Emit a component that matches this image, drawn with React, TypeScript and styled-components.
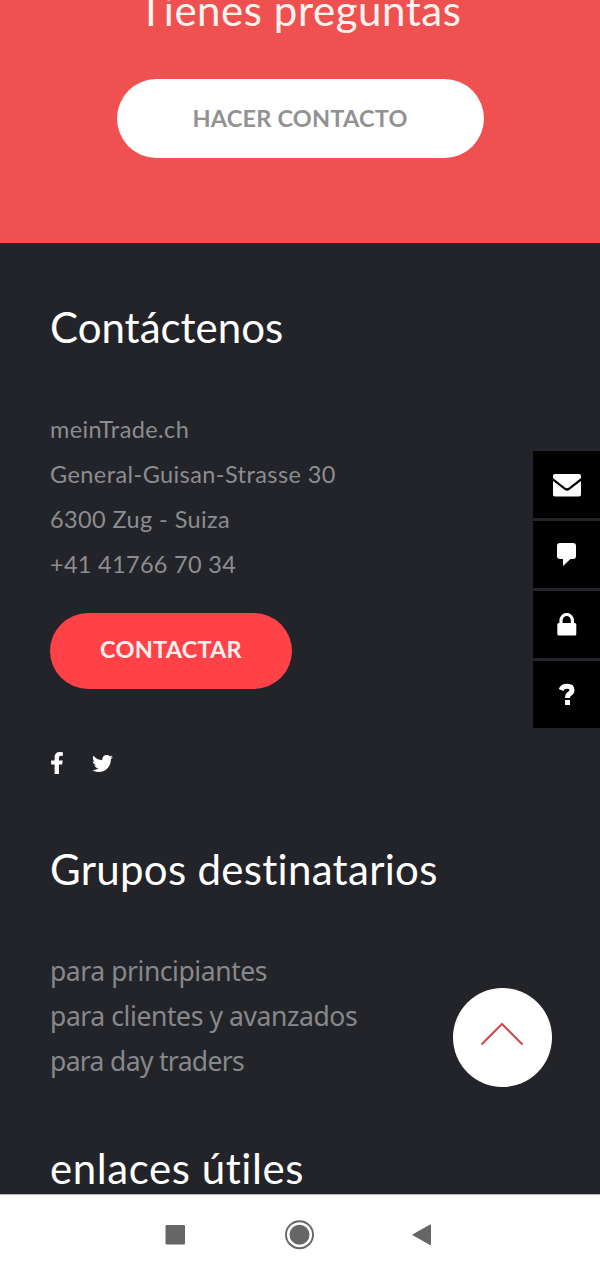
import React from 'react';
import styled, { createGlobalStyle } from 'styled-components';
import { FaFacebookF, FaTwitter } from 'react-icons/fa';

const GlobalStyle = createGlobalStyle`
  * { box-sizing: border-box; }
  body { margin: 0; background: #232429; overflow: hidden; }
  h2, p, ul { margin: 0; padding: 0; font-weight: 400; }
  svg { display: block; flex: none; }
`;

const Screen = styled.div`
  position: relative;
  display: flex;
  flex-direction: column;
  height: 1274px;
  overflow: hidden;
  background: #232429;
  font-family: Lato, sans-serif;
`;

const Banner = styled.section`
  display: flex;
  flex-direction: column;
  align-items: center;
  flex: none;
  height: 243px;
  background: #ef5150;
`;

const Heading = styled.h2<{ $spacing: number }>`
  font-size: 42px;
  line-height: 60px;
  letter-spacing: ${(p) => p.$spacing}px;
  white-space: nowrap;
  color: #fff;
`;

const BannerHeading = styled(Heading)`
  margin-top: -20px;
  color: #fff3f0;
`;

const Pill = styled.button<{ $primary?: boolean }>`
  display: flex;
  align-items: center;
  justify-content: center;
  width: ${(p) => (p.$primary ? 242 : 367)}px;
  height: ${(p) => (p.$primary ? 76 : 79)}px;
  padding: 0 0 ${(p) => (p.$primary ? 4 : 2)}px;
  border: 0;
  border-radius: 40px;
  background: ${(p) => (p.$primary ? '#ff4148' : '#fff')};
  color: ${(p) => (p.$primary ? '#fff0ee' : '#929292')};
  font: 700 23.5px Lato, sans-serif;
  letter-spacing: 0.2px;
`;

const BannerPill = styled(Pill)`
  margin-top: 39px;
`;

const Footer = styled.footer`
  flex: 1;
  min-height: 0;
  padding: 54px 50px 0;
  overflow: hidden;
`;

const Address = styled.div`
  margin: 50px 0 26px;
`;

const AddressLine = styled.p<{ $spacing: number }>`
  color: #8c8d90;
  font-size: 23.5px;
  line-height: 45px;
  letter-spacing: ${(p) => p.$spacing}px;
  white-space: nowrap;
`;

const Social = styled.div`
  display: flex;
  align-items: center;
  gap: 29px;
  height: 24px;
  margin: 62px 0 64px -4px;
  color: #fff;

  svg + svg {
    margin-left: -5px;
  }
`;

const Links = styled.ul`
  margin: 50px 0 54px;
  list-style: none;
`;

const LinkItem = styled.li<{ $spacing: number }>`
  color: #87888b;
  font-family: 'Noto Sans', sans-serif;
  font-size: 26.5px;
  line-height: 45px;
  letter-spacing: ${(p) => p.$spacing}px;
  white-space: nowrap;
`;

const SideTabs = styled.nav`
  position: absolute;
  top: 451px;
  right: 0;
  display: flex;
  flex-direction: column;
  gap: 3px;
`;

const SideTab = styled.div`
  display: flex;
  align-items: center;
  justify-content: center;
  width: 67px;
  height: 67px;
  background: #000;
`;

const ToTop = styled.div`
  position: absolute;
  left: 453px;
  top: 988px;
  display: flex;
  align-items: center;
  justify-content: center;
  width: 99px;
  height: 99px;
  padding: 0 2px 8px 0;
  border-radius: 50%;
  background: #fff;
`;

const SystemBar = styled.div`
  display: flex;
  flex: none;
  align-items: center;
  justify-content: space-between;
  height: 80px;
  padding: 0 168px 0 165px;
  border-top: 1px solid #b9bbba;
  background: #fff;
`;

const address: [string, number][] = [
  ['meinTrade.ch', 0.4],
  ['General-Guisan-Strasse 30', 0.42],
  ['6300 Zug - Suiza', 0.4],
  ['+41 41766 70 34', 0.3],
];

const links: [string, number][] = [
  ['para principiantes', -0.44],
  ['para clientes y avanzados', -0.41],
  ['para day traders', -0.66],
];

export default function App() {
  return (
    <Screen>
      <GlobalStyle />
      <Banner>
        <BannerHeading $spacing={0.55}>Tienes preguntas</BannerHeading>
        <BannerPill>HACER CONTACTO</BannerPill>
      </Banner>
      <Footer>
        <Heading $spacing={0}>Contáctenos</Heading>
        <Address>
          {address.map(([text, spacing]) => (
            <AddressLine key={text} $spacing={spacing}>{text}</AddressLine>
          ))}
        </Address>
        <Pill $primary>CONTACTAR</Pill>
        <Social>
          <FaFacebookF size={22} />
          <FaTwitter size={21} />
        </Social>
        <Heading $spacing={0.3}>Grupos destinatarios</Heading>
        <Links>
          {links.map(([text, spacing]) => (
            <LinkItem key={text} $spacing={spacing}>{text}</LinkItem>
          ))}
        </Links>
        <Heading $spacing={0.57}>enlaces útiles</Heading>
      </Footer>
      <SystemBar>
        <svg width="20" height="20"><rect x="0.5" width="19.5" height="19.5" rx="1" fill="#666" /></svg>
        <svg width="30" height="30">
          <circle cx="15.5" cy="14.7" r="13.5" fill="none" stroke="#666" strokeWidth="1.9" />
          <circle cx="15.5" cy="14.7" r="10" fill="#666" />
        </svg>
        <svg width="20" height="22"><path d="M18.5 0.8v20L0.8 10.8z" fill="#666" stroke="#666" strokeLinejoin="round" /></svg>
      </SystemBar>
      <SideTabs>
        <SideTab>
          <svg width="30" height="24" fill="#fff">
            <path d="M1 5V3Q1 1 3 1H27Q29 1 29 3V5L17 14.5Q15 16 13 14.5Z" />
            <path d="M1 8L12.5 16.8Q15 18.5 17.5 16.8L29 8V21.5Q29 23.5 27 23.5H3Q1 23.5 1 21.5Z" />
          </svg>
        </SideTab>
        <SideTab>
          <svg width="20" height="24" fill="#fff"><path d="M3 0H16Q19 0 19 3V13Q19 16 16 16H13.5L6 23V16H3Q0 16 0 13V3Q0 0 3 0Z" /></svg>
        </SideTab>
        <SideTab>
          <svg width="20" height="24" fill="#fff">
            <path d="M4 12V7.5a5.7 6 0 0 1 11.4 0V12" fill="none" stroke="#fff" strokeWidth="3.2" />
            <rect x="0.3" y="10" width="19" height="12.5" rx="1.5" />
          </svg>
        </SideTab>
        <SideTab>
          <svg width="20" height="24" fill="none" stroke="#fff" strokeWidth="5">
            <path d="M4 7Q5.5 3.3 10 3.3Q15 3.3 15 7.2Q15 9.5 12.5 10.8Q10.5 12 10.5 15" />
            <path d="M10.5 17V22" />
          </svg>
        </SideTab>
      </SideTabs>
      <ToTop>
        <svg width="44" height="24" fill="none" stroke="#d0484c" strokeWidth="2"><path d="M1.5 22.5L22 2L42.5 22.5" /></svg>
      </ToTop>
    </Screen>
  );
}
